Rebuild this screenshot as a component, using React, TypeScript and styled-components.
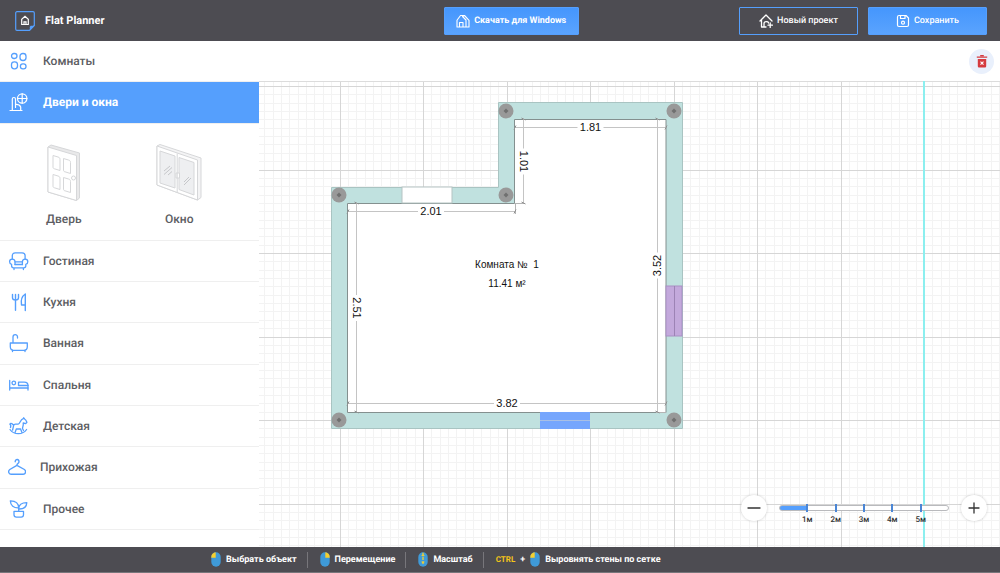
import React, { useState } from "react";
import styled, { createGlobalStyle, css } from "styled-components";

const BLUE = "#559ffd";
const DARK = "#4d4c52";

const GlobalStyle = createGlobalStyle`
  *, *::before, *::after { box-sizing: border-box; }
  body {
    margin: 0;
    background: #fff;
    color: #5c5d62;
    font-family: Roboto, "Liberation Sans", sans-serif;
    text-rendering: geometricPrecision;
  }
  button { font: inherit; cursor: pointer; text-rendering: inherit; }
`;

/* ---------- layout ---------- */

const Page = styled.div`
  display: flex;
  flex-direction: column;
  min-height: 100vh;
`;

const Header = styled.header`
  display: grid;
  grid-template-columns: 21fr auto 20fr;
  align-items: center;
  height: 41px;
  padding: 0 13px 0 15px;
  background: ${DARK};
`;

const Brand = styled.a`
  display: flex;
  align-items: center;
  gap: 10px;
  color: #fff;
  font-size: 11px;
  font-weight: 700;
  text-decoration: none;
`;

const Actions = styled.div`
  display: flex;
  justify-content: flex-end;
  gap: 10px;
`;

const HeaderButton = styled.button<{ $outlined?: boolean; $bold?: boolean; $width: number }>`
  display: flex;
  align-items: center;
  justify-content: center;
  gap: 4px;
  width: ${(p) => p.$width}px;
  height: 28px;
  padding: 0;
  border: 1px solid ${BLUE};
  border-radius: 1px;
  background: ${(p) => (p.$outlined ? "transparent" : "linear-gradient(#4596fd, #5aa3fe)")};
  color: #fff;
  font-size: 9px;
  font-weight: ${(p) => (p.$bold ? 700 : 500)};
  white-space: nowrap;
`;

const Main = styled.main`
  display: flex;
  flex: 1;
`;

const Sidebar = styled.nav`
  display: flex;
  flex-direction: column;
  flex: none;
  width: 259px;
  padding-bottom: 17px;
  background: #fff;
`;

const Category = styled.button<{ $active?: boolean }>`
  display: flex;
  flex: 1;
  align-items: center;
  gap: 14px;
  min-height: 41px;
  padding: 0 8px;
  border: 0;
  border-bottom: 1px solid #efefef;
  background: #fff;
  color: inherit;
  font-size: 12px;
  font-weight: 500;
  text-align: left;
  svg { color: ${BLUE}; }
  ${(p) => p.$active && css`
    background: ${BLUE};
    color: #fff;
    font-weight: 700;
    svg { color: #fff; }
  `}
`;

const Items = styled.div`
  display: grid;
  grid-template-columns: 1fr 1fr;
  height: 117px;
  padding: 20px 22px 0 6px;
  border-bottom: 1px solid #efefef;
`;

const Item = styled.button`
  display: flex;
  flex-direction: column;
  align-items: center;
  gap: 9px;
  padding: 0;
  border: 0;
  background: none;
  color: inherit;
  font-size: 12px;
  font-weight: 500;
  line-height: 16px;
`;

const Workspace = styled.section`
  display: flex;
  flex: 1;
  flex-direction: column;
  min-width: 0;
`;

const Toolbar = styled.div`
  display: flex;
  align-items: center;
  justify-content: flex-end;
  height: 40px;
  padding-right: 6px;
  background: #fff;
`;

const DeleteButton = styled.button`
  display: flex;
  align-items: center;
  justify-content: center;
  width: 25px;
  height: 25px;
  padding: 0;
  border: 0;
  border-radius: 50%;
  background: #e9f0fc;
`;

const Canvas = styled.div`
  position: relative;
  display: flex;
  flex: 1;
  min-height: 400px;
  overflow: hidden;
  > svg { flex: 1; min-width: 0; text-rendering: auto; }
`;

/* ---------- scale control, floats over the canvas ---------- */

const Scale = styled.div`
  position: absolute;
  right: 13px;
  bottom: 26px;
  display: flex;
  align-items: center;
  gap: 12px;
`;

const RoundButton = styled.button`
  display: flex;
  align-items: center;
  justify-content: center;
  width: 26px;
  height: 26px;
  padding: 0;
  border: 0;
  border-radius: 50%;
  background: #fff;
  box-shadow: 0 0 3px rgba(0, 0, 0, 0.2);
`;

const Track = styled.div`
  position: relative;
  display: flex;
  width: 170px;
`;

const Range = styled.input<{ $share: number }>`
  appearance: none;
  width: 100%;
  height: 6px;
  margin: 0;
  border: 1px solid #b9babd;
  border-radius: 3px;
  background: linear-gradient(to right, ${BLUE} ${(p) => p.$share}%, #fff ${(p) => p.$share}%) border-box;
  &::-webkit-slider-thumb { appearance: none; width: 2px; height: 6px; background: transparent; }
`;

const Ticks = styled.div`
  position: absolute;
  top: -1px;
  left: 0;
  right: 0;
  display: grid;
  grid-template-columns: repeat(6, 1fr);
  pointer-events: none;
`;

const Tick = styled.span`
  display: flex;
  flex-direction: column;
  align-items: center;
  gap: 3px;
  width: 200%;
  color: #333;
  font-size: 8px;
  font-weight: 500;
  line-height: 10px;
  &::before { content: ""; width: 2px; height: 8px; background: #4a86d6; }
`;

/* ---------- footer ---------- */

const Footer = styled.footer`
  display: flex;
  align-items: center;
  height: 26px;
  padding-left: 199px;
  background: ${DARK};
  border-bottom: 1px solid #77767b;
  color: #fff;
  font-size: 9px;
  font-weight: 700;
  white-space: nowrap;
`;

const Hint = styled.div`
  display: flex;
  align-items: center;
  gap: 5px;
  height: 16px;
  padding: 0 10px 0 12px;
  & + & { border-left: 1px solid #77767b; }
`;

const Key = styled.kbd`
  color: #f5c518;
  font: inherit;
  font-size: 8px;
`;

/* ---------- icons ---------- */

const Line: React.FC<{ w?: number; h?: number; sw?: number; children: React.ReactNode }> = ({ w = 21, h = 20, sw = 1.3, children }) => (
  <svg width={w} height={h} viewBox={`0 0 ${w} ${h}`} fill="none" stroke="currentColor" strokeWidth={sw} strokeLinecap="round" strokeLinejoin="round" aria-hidden="true">
    {children}
  </svg>
);

const RoomsIcon = () => (
  <Line>
    <rect x="3.5" y="2.5" width="5.5" height="5" rx="2.4" />
    <rect x="12" y="2.5" width="6" height="7" rx="2.8" />
    <rect x="3.5" y="10.8" width="6" height="7" rx="2.8" />
    <rect x="12.4" y="12.8" width="5.6" height="5" rx="2.4" />
  </Line>
);

const DoorsIcon = () => (
  <Line sw={1.2}>
    <circle cx="14.2" cy="6.5" r="4.7" />
    <path d="M14.2 1.8v9.4M9.5 6.5h9.4M2 18.5h12M4.3 18.5V7c0-2 3.2-2 3.2 0v5.5M7.5 12.5c2.2-.2 4.4.8 5.2 2.5v3.5M7.5 12.5v3" />
  </Line>
);

const SofaIcon = () => (
  <Line>
    <path d="M4.3 8V4.800c0-1.800 1-3 3-3h6.800c2 0 3 1.200 3 3V8M7 10.800h7.500M7 13.500h7.500" />
    <path d="M7 13.500v-2.800c0-3.600-5.400-3.300-5.400 0 0 1.500 1 2.300 2 2.600v1.400c0 1.400.8 2.100 2 2.100h10.200c1.200 0 2-.7 2-2.100v-1.400c1-.3 2-1.100 2-2.600 0-3.300-5.400-3.600-5.400 0v2.800M6 16.900v1.600M15.400 16.900v1.600" />
  </Line>
);

const KitchenIcon = () => (
  <Line sw={1.400}>
    <path d="M4.500 2.500v3.300c0 1.500 1.200 2.200 3 2.200s3-.7 3-2.200V2.500M7.500 2.500V18.300" />
    <path d="M17.300 13H13.500c-.8-4.500.8-9 3.800-11v16.500" />
  </Line>
);

const BathIcon = () => (
  <Line>
    <path d="M2.300 10h17v3.800c0 2.400-1.300 3.600-3.600 3.600H5.900c-2.300 0-3.600-1.200-3.600-3.600zM4.500 17v1.500M17 17v1.500M5 10V4c0-3 4.500-3 4.500-.2V5" />
  </Line>
);

const BedIcon = () => (
  <Line>
    <path d="M1.700 5.500V15M1.700 13h18.300v2M10.500 10.500V7.200h5.800c2.200 0 3.700 1.200 3.700 3.300z" />
    <circle cx="5.800" cy="8" r="1.800" />
    <path d="M20 10.500V13" />
  </Line>
);

const HorseIcon = () => (
  <Line>
    <path d="M4.600 14 5.600 9.600c.2-1 .9-1.500 1.900-1.500h2.700c2 0 1.800-4.600 5-5.400l.5-.9.900 1.200c1 .5 1.700 1.800 2.300 3.300l-1.200 1.400-2.500-.7c.5 3-.8 3.800-.7 5.500l1 2M5.400 9C3.600 6.700 2.300 7 1.900 8.300c1 .3 1 1.800.6 3.200" />
    <path d="M2 13.500c3.800 5.600 12.800 5.600 16.600 0M7 16.700l1.300-3.700h4.300l1.400 3.700" />
  </Line>
);

const HangerIcon = () => (
  <Line w={18} sw={1.400}>
    <path d="M7.200 4.800c0-3.400 4.300-2.800 3.700.3-.3 1.500-2 1.500-2 3.200L1.800 12.500c-2 1.500-1.300 4.800 1.200 4.800h12.200c2.500 0 3.200-3.300 1.200-4.800L8.900 8.300" />
  </Line>
);

const PlantIcon = () => (
  <Line>
    <path d="M10.700 12V8.800C10.500 4.200 7.500 1.700 2.300 1.800c.2 4.700 3.500 7.300 8.400 7M10.700 9.500c.2-3.500 3.200-5.900 8.100-5.900-.2 4.200-3.300 6.600-8.100 6.400" />
    <path d="M6 12.300h9.500v3.500c0 1.500-.9 2.400-2.400 2.400H8.400c-1.500 0-2.400-.9-2.400-2.400z" />
  </Line>
);

const LogoIcon = () => (
  <svg width="20" height="20" viewBox="0 0 20 20" fill="none" aria-hidden="true">
    <path d="M2 .7h16c.8 0 1.300.5 1.300 1.300v12.500l-4.800 4.800H2c-.8 0-1.300-.5-1.300-1.300V2C.7 1.200 1.200.7 2 .7z" stroke={BLUE} strokeWidth="1.200" />
    <path d="M19.500 14.800h-3.200c-.9 0-1.500.6-1.500 1.500v3.200z" fill={BLUE} />
    <path d="M6.700 13.500V8.200L10 5.300l3.300 2.900v5.300zM9 13.300v-2.500h2v2.500" stroke="#fff" strokeWidth="1.200" />
  </svg>
);

const HouseIcon = () => (
  <Line w={14} h={14} sw={1.100}>
    <path d="M1 13V6.300L4.500 1.500h4L13 6.300V13zM8.500 1.500 6.500 2.500 10 6v7M3.500 13V8.500H7V13" />
  </Line>
);

const NewHouseIcon = () => (
  <Line w={14} h={14} sw={1.300}>
    <path d="M1 7 7 1l6 6M2.500 5.500V13H7M5 13V9.500C5 7 9.500 7 9.500 9M11.200 9v4.500M9 11.200h4.500" />
  </Line>
);

const SaveIcon = () => (
  <Line w={14} h={14} sw={1.200}>
    <path d="M3 1.500h7L12.500 4v7c0 1-.5 1.500-1.500 1.500H3c-1 0-1.500-.5-1.500-1.500V3c0-1 .5-1.500 1.500-1.500zM4.500 1.500v3h4.500v-3" />
    <circle cx="7" cy="8.700" r="1.500" />
  </Line>
);

const TrashIcon = () => (
  <svg width="12" height="13" viewBox="0 0 12 13" fill="none" aria-hidden="true">
    <path d="M4.200.7h3.600M.8 2.200h10.400" stroke="#d53b40" strokeWidth="1.300" />
    <path d="M1.800 4h8.400v7c0 1-.6 1.600-1.600 1.600H3.400c-1 0-1.600-.6-1.600-1.600z" fill="#d53b40" />
    <path d="m4.500 6.700 3 3m0-3-3 3" stroke="#fff" strokeWidth="1.100" />
  </svg>
);

const MouseIcon: React.FC<{ part: "left" | "right" | "wheel" }> = ({ part }) => (
  <svg width="10" height="15" viewBox="0 0 10 15" aria-hidden="true">
    <rect x=".3" y=".3" width="9.400" height="14.400" rx="4.700" fill="#3f9ad8" />
    {part === "left" && <path d="M4.700.3v5.500H.3V5C.3 2.300 2.200.5 4.700.3z" fill="#f6cf2e" />}
    {part === "right" && <path d="M5.300.3v5.500h4.400V5C9.700 2.300 7.800.5 5.300.3z" fill="#f6cf2e" />}
    {part === "wheel" && <path d="M5 .8v2M3.800 4 5 2.800 6.200 4M5 5v3M3.800 9.500 5 10.700l1.200-1.200M5 10.500v1.500" fill="none" stroke="#f6cf2e" strokeWidth="1.300" />}
  </svg>
);

const DoorPicture = () => (
  <svg width="34" height="58" viewBox="0 0 34 58" fill="#fff" stroke="#d6d7d9" strokeLinejoin="round" aria-hidden="true">
    <path d="M1 3 4 1l28.500 8v45l-3 2.500L1 48z" fill="#e9e9ea" />
    <path d="M1 3 29.500 11.500v45L1 48z" />
    <path d="m6 11.500 5 1.500c1.500.5 2 1 2 2.500v11l-5.500-1.700C6.300 24.500 6 24 6 23zM16.500 14.500l5 1.500c1.500.5 2 1 2 2.500v11L18 27.800c-1.200-.3-1.500-.8-1.500-1.800zM6 30.500l5 1.500c1.500.5 2 1 2 2.500v11l-5.500-1.700C6.300 43.500 6 43 6 42zM16.500 33.500l5 1.500c1.500.5 2 1 2 2.500v11L18 46.800c-1.200-.3-1.500-.8-1.500-1.800z" />
    <circle cx="26.500" cy="34" r="2" />
  </svg>
);

const WindowPicture = () => (
  <svg width="46" height="58" viewBox="0 0 46 58" fill="#fff" stroke="#d6d7d9" strokeLinejoin="round" aria-hidden="true">
    <path d="m1 2 3-1.500 41 13.500v39.500L41.500 56 1 41z" fill="#f4f4f5" />
    <path d="m1 2 40.500 14v40L1 41z" />
    <path d="m4 7 15 5v32L4 39zM23 13.500l15 5V51l-15-5.500z" fill="#eeeff1" />
    <path d="M21.200 9.500v39M20 29h3.500v5H20z" />
    <path d="m8 27 6-5M8 30.500l8-7M12 31l4-3.500M28 38l5-5M28 41l7-7" stroke="#c6c7ca" fill="none" />
  </svg>
);

/* ---------- plan drawing ---------- */

const TILE = 167;
const STEPS = Array.from({ length: 20 }, (_, i) => (i * TILE) / 20);
const COLUMNS = STEPS.map(Math.floor);
const ROWS = STEPS.map(Math.round);
const isMajor = (index: number) => index % 10 === 0;

const GridTile = ({ major }: { major: boolean }) => (
  <g fill={major ? "#d6d6d6" : "#f3f3f3"}>
    {COLUMNS.map((c, i) => isMajor(i) === major && <rect key={`v${c}`} x={c} width="1" height={TILE} />)}
    {ROWS.map((r, i) => isMajor(i) === major && <rect key={`h${r}`} y={r} width={TILE} height="1" />)}
  </g>
);

const Dimension: React.FC<{ x: number; y: number; from: number; to: number; label: string; turn?: number }> = ({ x, y, from, to, label, turn = 0 }) => {
  const vertical = turn !== 0;
  const at = vertical ? y : x;
  const line = vertical
    ? `M${x} ${from}V${at - 13}M${x} ${at + 13}V${to}`
    : `M${from} ${y}H${at - 13}M${at + 13} ${y}H${to}`;
  const ends = vertical
    ? `M${x - 2} ${from - 1}l4 2M${x - 2} ${to - 1}l4 2`
    : `M${from - 1} ${y + 2}l2-4M${to - 1} ${y + 2}l2-4`;
  return (
    <g>
      <path d={line} fill="none" stroke="#c4c4c4" />
      <path d={ends} fill="none" stroke="#8f8f8f" />
      <text y={turn > 0 ? 0 : -1} transform={`translate(${x} ${y}) rotate(${turn})`} textAnchor="middle" dominantBaseline="central">
        {label}
      </text>
    </g>
  );
};

const JOINTS = [[8, 93], [175, 93], [175, 9], [343, 9], [8, 318], [343, 318]];

const FloorPlan = () => (
  <svg role="img" aria-label="План: Комната № 1">
    <defs>
      <pattern id="grid" x="81" y="5" width={TILE} height={TILE} patternUnits="userSpaceOnUse">
        <GridTile major={false} />
        <GridTile major />
      </pattern>
    </defs>
    <rect width="100%" height="100%" fill="#fff" />
    <rect width="100%" height="100%" fill="url(#grid)" />
    <rect width="100%" height="1" fill="#dcdcdc" />
    <rect x="664" width="2" height="100%" fill="#8cefef" />
    <g transform="translate(72 21)" fontFamily='"Liberation Sans", sans-serif' fontSize="11" fill="#111">
      <path d="M.5 85.500H167.500V.5H351.500V326.500H.5Z" fill="#c0e1df" stroke="#a9c4c2" />
      <path d="M16.500 101.500H183.500V17.500H335V310.500H16.500Z" fill="#fff" stroke="#84908f" />
      <rect x="71" y="85" width="50" height="16" fill="#fff" stroke="#b5c4c3" />
      <rect x="335" y="184" width="16" height="50" fill="#c3a9dc" stroke="#a98fc4" />
      <path d="M343.500 184v50" stroke="#9c83b5" />
      <rect x="209" y="310" width="50" height="17" fill="#76a6fd" />
      <path d="M209 318.500h50" stroke="#a9bfe4" />
      {JOINTS.map(([x, y]) => (
        <g key={`${x}-${y}`}>
          <circle cx={x} cy={y} r="7.500" fill="#999" />
          <path d={`M${x} ${y - 2.500}l2.500 2.500-2.500 2.500-2.500-2.500z`} fill="#707070" />
        </g>
      ))}
      <path d="M184.500 101v11M184 101.500h10M335 310.500h-10" stroke="#b4b4b4" />
      <Dimension x={259.5} y={25.5} from={184} to={335} label="1.81" />
      <Dimension x={192.5} y={59.500} from={17} to={101} label="1.01" turn={90} />
      <Dimension x={100} y={109.500} from={17} to={184} label="2.01" />
      <Dimension x={25.5} y={206} from={101} to={310} label="2.51" turn={90} />
      <Dimension x={326.500} y={163.500} from={17} to={310} label="3.52" turn={-90} />
      <Dimension x={176} y={301.500} from={17} to={335} label="3.82" />
      <g fontSize="10" textAnchor="middle">
        <text x="176" y="166" xmlSpace="preserve">{"Комната №  1"}</text>
        <text x="176" y="185">11.41 м²</text>
      </g>
    </g>
  </svg>
);

/* ---------- page ---------- */

const BEFORE = [{ name: "Комнаты", Icon: RoomsIcon }];
const AFTER = [
  { name: "Гостиная", Icon: SofaIcon },
  { name: "Кухня", Icon: KitchenIcon },
  { name: "Ванная", Icon: BathIcon },
  { name: "Спальня", Icon: BedIcon },
  { name: "Детская", Icon: HorseIcon },
  { name: "Прихожая", Icon: HangerIcon },
  { name: "Прочее", Icon: PlantIcon },
];

export default function App() {
  const [scale, setScale] = useState(1);
  return (
    <Page>
      <GlobalStyle />
      <Header>
        <Brand href="#"><LogoIcon />Flat Planner</Brand>
        <HeaderButton $width={135} $bold><HouseIcon />Скачать для Windows</HeaderButton>
        <Actions>
          <HeaderButton $width={119} $outlined><NewHouseIcon />Новый проект</HeaderButton>
          <HeaderButton $width={119}><SaveIcon />Сохранить</HeaderButton>
        </Actions>
      </Header>
      <Main>
        <Sidebar>
          {BEFORE.map(({ name, Icon }) => <Category key={name}><Icon />{name}</Category>)}
          <Category $active><DoorsIcon />Двери и окна</Category>
          <Items>
            <Item><DoorPicture />Дверь</Item>
            <Item><WindowPicture />Окно</Item>
          </Items>
          {AFTER.map(({ name, Icon }) => <Category key={name}><Icon />{name}</Category>)}
        </Sidebar>
        <Workspace>
          <Toolbar>
            <DeleteButton aria-label="Удалить"><TrashIcon /></DeleteButton>
          </Toolbar>
          <Canvas>
            <FloorPlan />
            <Scale>
              <RoundButton aria-label="Уменьшить" onClick={() => setScale(Math.max(0, scale - 1))}>
                <Line w={14} h={14}><path d="M1 7h12" stroke="#333" /></Line>
              </RoundButton>
              <Track>
                <Range type="range" aria-label="Масштаб" min={0} max={6} value={scale} $share={(scale / 6) * 100} onChange={(e) => setScale(Number(e.target.value))} />
                <Ticks>
                  {[1, 2, 3, 4, 5].map((m) => <Tick key={m}>{m}м</Tick>)}
                </Ticks>
              </Track>
              <RoundButton aria-label="Увеличить" onClick={() => setScale(Math.min(6, scale + 1))}>
                <Line w={14} h={14}><path d="M2 7h10M7 2v10" stroke="#333" /></Line>
              </RoundButton>
            </Scale>
          </Canvas>
        </Workspace>
      </Main>
      <Footer>
        <Hint><MouseIcon part="left" />Выбрать объект</Hint>
        <Hint><MouseIcon part="right" />Перемещение</Hint>
        <Hint><MouseIcon part="wheel" />Масштаб</Hint>
        <Hint><Key>CTRL</Key>+<MouseIcon part="left" />Выровнять стены по сетке</Hint>
      </Footer>
    </Page>
  );
}
